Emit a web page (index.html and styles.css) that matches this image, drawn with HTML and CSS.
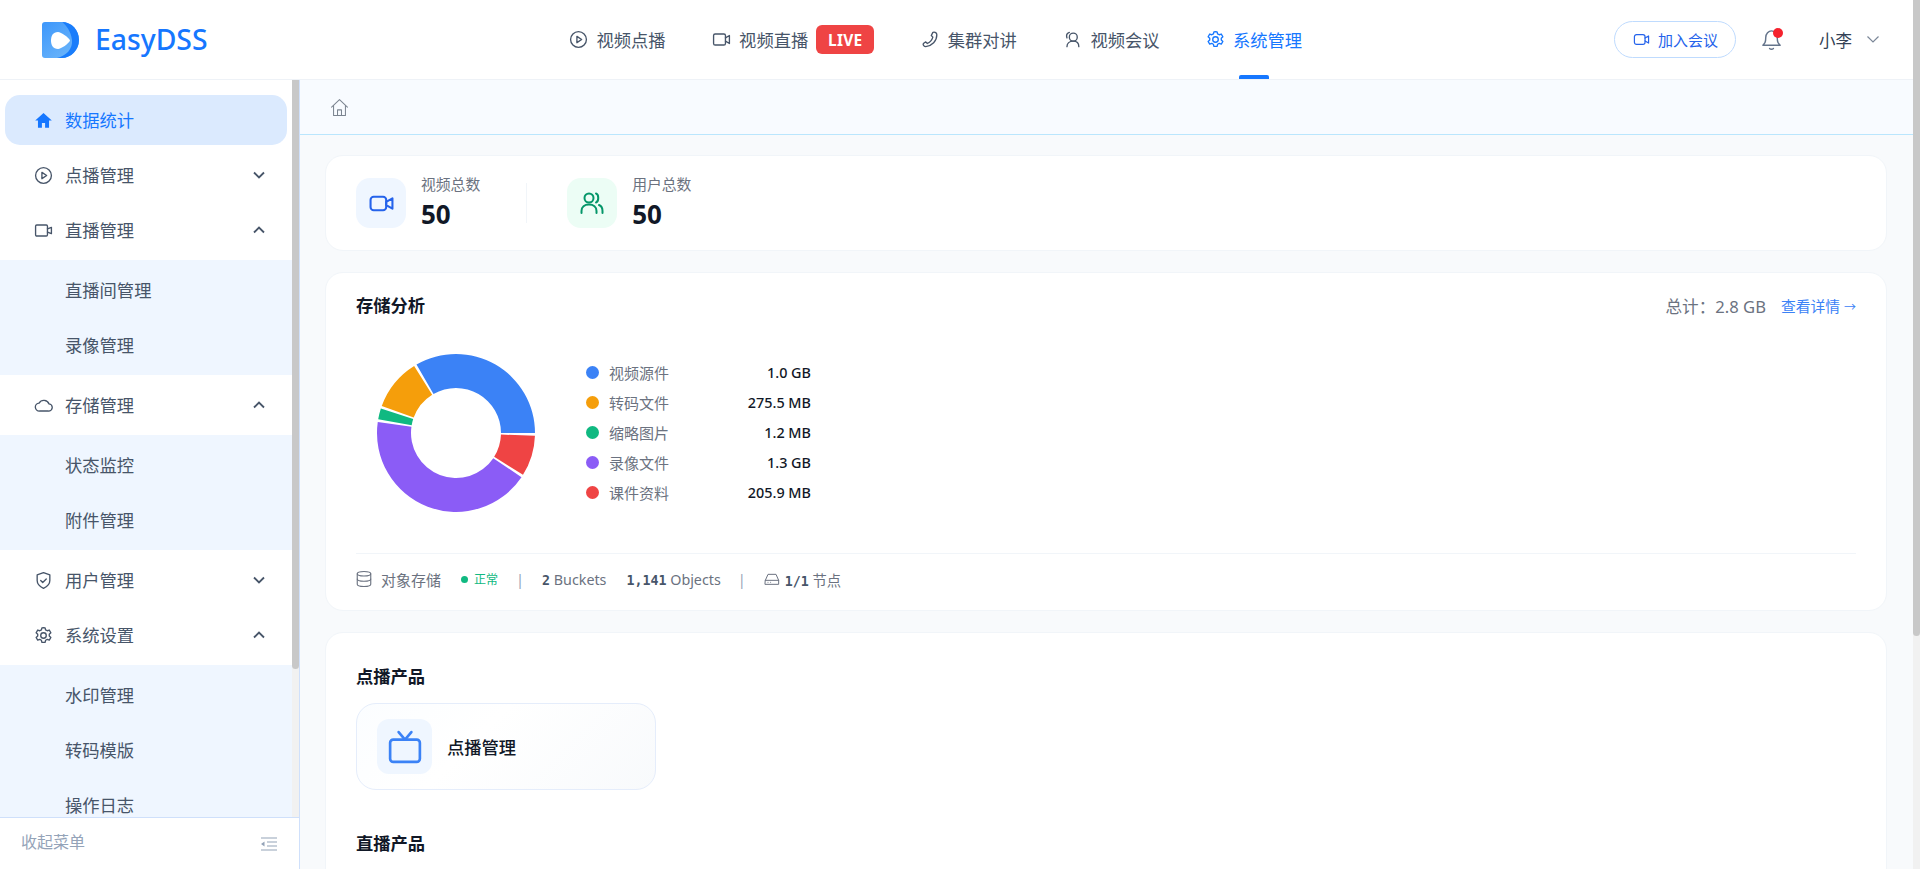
FILE: index.html
```html
<!DOCTYPE html>
<html lang="zh-CN">
<head>
<meta charset="utf-8">
<title>EasyDSS</title>
<link rel="stylesheet" href="styles.css">
</head>
<body>
<div class="app">
  <div class="page">
    <header class="topbar">
      <a class="logo">
        <svg class="logo-mark" viewBox="0 0 37 36" width="37" height="36">
          <defs>
            <linearGradient id="lg1" x1="0" y1="0" x2="0.8" y2="1"><stop offset="0" stop-color="#3d97fb"/><stop offset="1" stop-color="#6db6fa"/></linearGradient>
          </defs>
          <path d="M3 0H19C29 0 37 8 37 18C37 28 29 36 19 36H3C1 36 0 35 0 33V3C0 1 1 0 3 0Z" fill="url(#lg1)"/>
          <path d="M20 0C30 0 37 8 37 18C37 28 29 36 20 36H15C24 34 31 27 30 18C29 9 24 3 20 0Z" fill="#1a7dfb"/>
          <path d="M16 10C11 10 9 14 9 18.500C9 23 11 27 16 27C19 27 27 21.500 28 18.500C27 15.500 19 10 16 10Z" fill="#fff"/>
        </svg>
        <span class="logo-text">EasyDSS</span>
      </a>
      <nav class="topnav">
        <a class="tn-item">
          <svg class="ic19" viewBox="0 0 24 24"><circle cx="12" cy="12" r="10"/><path d="M10 8l6 4-6 4z"/></svg>
          <span>视频点播</span>
        </a>
        <a class="tn-item">
          <svg class="ic19" viewBox="0 0 24 24"><rect x="2" y="5" width="15" height="14" rx="2"/><path d="M17 10l5-3v10l-5-3"/></svg>
          <span>视频直播</span><span class="live">LIVE</span>
        </a>
        <a class="tn-item">
          <svg class="ic19" viewBox="0 0 24 24"><path d="M15 3c3-1 5 1 5 3 0 8-6 14-14 15-2 0-4-2-3-4l3-2 2 2c3-1 6-5 7-8l-2-2z"/></svg>
          <span>集群对讲</span>
        </a>
        <a class="tn-item">
          <svg class="ic19" viewBox="0 0 24 24"><circle cx="13" cy="9" r="5"/><path d="M5 21c0-4 3-7 8-7s7 3 7 7"/><path d="M8 3C5 4 4 7 5 10"/></svg>
          <span>视频会议</span>
        </a>
        <a class="tn-item is-active">
          <svg class="ic19" viewBox="0 0 24 24"><path d="M12 2l2 .3.7 2.7 2 1 2.6-.9 2 3.400-2 1.900v2.200l2 1.900-2 3.400-2.600-.9-2 1-.7 2.700h-4l-.7-2.700-2-1-2.600.9-2-3.400 2-1.900v-2.200l-2-1.900 2-3.400 2.600.9 2-1 .7-2.700z"/><circle cx="12" cy="12" r="3.500"/></svg>
          <span>系统管理</span>
        </a>
      </nav>
      <div class="top-right">
        <button class="join">
          <svg class="ic17" viewBox="0 0 24 24"><rect x="2" y="5" width="15" height="14" rx="3"/><path d="M17 10l5-3v10l-5-3"/></svg>
          <span>加入会议</span>
        </button>
        <span class="bell">
          <svg class="ic23" viewBox="0 0 24 24"><path d="M3 18c2-2 3-3 3-8 0-4 3-7 6-7s6 3 6 7c0 5 1 6 3 8z"/><path d="M10 21.500c1 1 3 1 4 0"/></svg>
          <i class="bell-dot"></i>
        </span>
        <span class="user">小李</span>
        <svg class="user-chev" viewBox="0 0 12 7"><path d="M.5.5L6 6l5.500-5.500"/></svg>
      </div>
    </header>

    <div class="layout">
      <aside class="sidebar">
        <div class="side-scroll">
          <ul class="menu">
            <li class="row is-active">
              <svg class="ic19 solid" viewBox="0 0 24 24"><path d="M12 2.500L1.500 12H5v9h5v-6h4v6h5v-9h3.500z"/></svg>
              <span>数据统计</span>
            </li>
            <li class="row">
              <svg class="ic19" viewBox="0 0 24 24"><circle cx="12" cy="12" r="10"/><path d="M10 8l6 4-6 4z"/></svg>
              <span>点播管理</span>
              <svg class="chev" viewBox="0 0 12 8"><path d="M1 1.500l5 5 5-5"/></svg>
            </li>
            <li class="row">
              <svg class="ic19" viewBox="0 0 24 24"><rect x="2" y="5" width="15" height="14" rx="1.500"/><path d="M17 10l5-2v8l-5-2"/></svg>
              <span>直播管理</span>
              <svg class="chev" viewBox="0 0 12 8"><path d="M1 6.500l5-5 5 5"/></svg>
            </li>
            <li class="sub">
              <a class="sub-row">直播间管理</a>
              <a class="sub-row">录像管理</a>
            </li>
            <li class="row">
              <svg class="ic19" viewBox="0 0 24 24"><path d="M7 19a5 5 0 0 1-.6-10A7 7 0 0 1 19 10a4.500 4.500 0 0 1-1 9z"/></svg>
              <span>存储管理</span>
              <svg class="chev" viewBox="0 0 12 8"><path d="M1 6.500l5-5 5 5"/></svg>
            </li>
            <li class="sub">
              <a class="sub-row">状态监控</a>
              <a class="sub-row">附件管理</a>
            </li>
            <li class="row">
              <svg class="ic19" viewBox="0 0 24 24"><path d="M12 2l8 3v7c0 5-4 8-8 10-4-2-8-5-8-10V5z"/><path d="M8.500 12l2.500 2.500 4.500-4.500"/></svg>
              <span>用户管理</span>
              <svg class="chev" viewBox="0 0 12 8"><path d="M1 1.500l5 5 5-5"/></svg>
            </li>
            <li class="row">
              <svg class="ic19" viewBox="0 0 24 24"><path d="M12 2l2 .3.7 2.700 2 1 2.600-.9 2 3.400-2 1.900v2.200l2 1.900-2 3.400-2.600-.9-2 1-.7 2.700h-4l-.7-2.700-2-1-2.600.9-2-3.400 2-1.900v-2.200l-2-1.900 2-3.400 2.600.9 2-1 .7-2.700z"/><circle cx="12" cy="12" r="3.500"/></svg>
              <span>系统设置</span>
              <svg class="chev" viewBox="0 0 12 8"><path d="M1 6.500l5-5 5 5"/></svg>
            </li>
            <li class="sub">
              <a class="sub-row">水印管理</a>
              <a class="sub-row">转码模版</a>
              <a class="sub-row">操作日志</a>
            </li>
          </ul>
          <div class="vbar side"><div class="thumb"></div></div>
        </div>
        <div class="side-foot">
          <span>收起菜单</span>
          <svg class="collapse" viewBox="0 0 18 14"><path d="M1 1h16M7 5h10M7 9h10M1 13h16"/><path class="fill" d="M4.500 4.500L1 7l3.500 2.500z"/></svg>
        </div>
      </aside>

      <main class="main">
        <div class="crumb">
          <svg class="ic19 home" viewBox="0 0 24 24"><path d="M2 11.500L12 2l10 9.500"/><path d="M4.500 9.500V22h15V9.500"/><path d="M9.500 22v-7h5v7"/></svg>
        </div>
        <div class="content">
          <section class="card stats">
            <div class="stat">
              <div class="stat-ic blue">
                <svg viewBox="0 0 24 24" width="25" height="25"><rect x="1.500" y="5.500" width="15" height="13" rx="3"/><path d="M16.500 10.500l6-3.500v10l-6-3.500z"/></svg>
              </div>
              <div class="stat-tx"><div class="stat-l">视频总数</div><div class="stat-v">50</div></div>
            </div>
            <div class="vline"></div>
            <div class="stat">
              <div class="stat-ic green">
                <svg viewBox="0 0 24 24" width="24" height="24"><circle cx="9" cy="7" r="4.500"/><path d="M1.500 22v-2c0-4 3-6.500 7.500-6.500s7.500 2.500 7.500 6.500v2"/><path d="M16 2.500c3 .8 3 8 0 9"/><path d="M19 14c2.500 1 3.500 3 3.500 6v2"/></svg>
              </div>
              <div class="stat-tx"><div class="stat-l">用户总数</div><div class="stat-v">50</div></div>
            </div>
          </section>

          <section class="card storage">
            <div class="st-head">
              <h3 class="h-title">存储分析</h3>
              <div class="st-total">总计：2.8 GB</div>
              <a class="st-link">查看详情 <span class="arr">→</span></a>
            </div>
            <div class="st-body">
              <svg class="donut" viewBox="0 0 160 160" width="160" height="160">
                <path fill="#3b82f6" d="M159 80A79 79 0 0 0 40.500 11.590L57.500 41.030A45 45 0 0 1 125 80Z"/>
                <path fill="#f59e0b" d="M38.140 13.010A79 79 0 0 0 5.760 52.980L37.710 64.610A45 45 0 0 1 56.150 41.840Z"/>
                <path fill="#10b981" d="M4.860 55.590A79 79 0 0 0 2.200 66.280L35.680 72.190A45 45 0 0 1 37.200 66.090Z"/>
                <path fill="#8b5cf6" d="M1.770 69A79 79 0 0 0 145.490 124.180L117.310 105.160A45 45 0 0 1 35.440 73.740Z"/>
                <path fill="#ef4444" d="M146.990 121.860A79 79 0 0 0 158.950 82.760L124.970 81.570A45 45 0 0 1 118.160 103.850Z"/>
              </svg>
              <ul class="legend">
                <li><i class="dot c1"></i><span class="lg-l">视频源件</span><b class="lg-v">1.0 GB</b></li>
                <li><i class="dot c2"></i><span class="lg-l">转码文件</span><b class="lg-v">275.5 MB</b></li>
                <li><i class="dot c3"></i><span class="lg-l">缩略图片</span><b class="lg-v">1.2 MB</b></li>
                <li><i class="dot c4"></i><span class="lg-l">录像文件</span><b class="lg-v">1.3 GB</b></li>
                <li><i class="dot c5"></i><span class="lg-l">课件资料</span><b class="lg-v">205.9 MB</b></li>
              </ul>
            </div>
            <div class="st-foot">
              <svg class="ic18 gray db" viewBox="0 0 24 24"><ellipse cx="12" cy="5" rx="9" ry="3"/><path d="M3 5v14c0 1.700 4 3 9 3s9-1.300 9-3V5"/><path d="M3 12c0 1.700 4 3 9 3s9-1.300 9-3"/></svg>
              <span class="f-name">对象存储</span>
              <span class="f-status"><i></i>正常</span>
              <span class="f-sep">|</span>
              <span class="f-m"><b>2</b> Buckets</span>
              <span class="f-m f-obj"><b>1,141</b> Objects</span>
              <span class="f-sep second">|</span>
              <svg class="ic16 gray hdd" viewBox="0 0 24 24"><path d="M2 14l4-9h12l4 9v6H2z"/><path d="M2 14h20"/><path d="M6 17h.01M10 17h.01"/></svg>
              <span class="f-m f-node"><b>1/1</b> 节点</span>
            </div>
          </section>

          <section class="card products">
            <h3 class="h-title">点播产品</h3>
            <div class="tiles">
              <a class="tile">
                <span class="tile-ic"><svg viewBox="0 0 32 32" width="34" height="34"><rect x="2" y="9" width="28" height="21" rx="3"/><path d="M10 2l6 7 6-7"/></svg></span>
                <span class="tile-t">点播管理</span>
              </a>
            </div>
            <h3 class="h-title next">直播产品</h3>
          </section>
        </div>
      </main>
    </div>
  </div>
  <div class="vbar page-bar"><div class="thumb"></div></div>
</div>
</body>
</html>
```
FILE: styles.css
```css
* { box-sizing: border-box; }
html, body { margin: 0; height: 100%; overflow: hidden; }
body {
  font-family: "Noto Sans", "Noto Sans CJK SC", sans-serif;
  color: #475569;
  background: #f8fafc;
}
ul { list-style: none; margin: 0; padding: 0; }
h3 { margin: 0; }
svg { flex: none; display: block; }

.app { display: flex; height: 100vh; overflow: hidden; }
.page { flex: 1; min-width: 0; height: 100%; overflow: hidden; }

/* drawn scrollbars */
.vbar { flex: none; width: 7px; background: #f1f1f1; }
.thumb { width: 100%; background: #c8c8c8; border-radius: 0 0 4px 4px; }
.page-bar .thumb { height: 636px; }
.vbar.side .thumb { height: 589px; }

.ic16, .ic17, .ic18, .ic19, .ic23 { fill: none; stroke: currentColor; stroke-width: 1.7; stroke-linejoin: round; stroke-linecap: round; }
.ic16 { width: 16px; height: 16px; }
.ic17 { width: 17px; height: 17px; }
.ic18 { width: 18px; height: 18px; }
.ic19 { width: 19px; height: 19px; }
.ic23 { width: 23px; height: 23px; stroke-width: 1.500; }

/* top bar */
.topbar {
  display: flex; align-items: center;
  height: 80px; padding: 0 34px 0 42px;
  background: #fff;
  border-bottom: 1px solid #eef2f7;
}
.logo { display: flex; align-items: center; gap: 16px; }
.logo-text { font-size: 28.300px; font-weight: 500; color: #1677ff; line-height: 1; }
.topnav { display: flex; align-items: center; gap: 46.500px; margin-left: 362px; height: 79px; }
.tn-item { position: relative; display: flex; align-items: center; height: 100%; gap: 8px; font-size: 17.300px; color: #475569; }
.tn-item.is-active { color: #1677ff; }
.tn-item.is-active::after {
  content: ""; position: absolute; left: 33px; bottom: 0; width: 30px; height: 4px;
  background: #1677ff; border-radius: 2px 2px 0 0;
}
.live {
  width: 58px; height: 29px; display: flex; align-items: center; justify-content: center;
  background: #ef4444; color: #fff; border-radius: 6px; font-size: 15.500px; font-weight: 700; letter-spacing: .2px;
}
.top-right { margin-left: auto; display: flex; align-items: center; }
.join {
  display: flex; align-items: center; gap: 8px; height: 37px; width: 122px; padding: 0 0 0 18px;
  border: 1px solid #bfdbfe; border-radius: 19px; background: #fff; color: #2563eb;
  font: inherit; font-size: 15px;
}
.bell { position: relative; margin-left: 24px; color: #64748b; }
.bell-dot { position: absolute; right: 0; top: 0; width: 10px; height: 10px; border-radius: 50%; background: #f5222d; }
.user { margin-left: 36px; font-size: 16.500px; color: #334155; }
.user-chev { margin-left: 15px; width: 12px; height: 7px; fill: none; stroke: #7b8798; stroke-width: 1.200; }

/* layout */
.layout { display: flex; align-items: flex-start; }
.sidebar {
  flex: none;
  display: flex; flex-direction: column;
  width: 300px; height: 789px;
  background: #fff;
  border-right: 1px solid #cfe0fb;
}
.side-scroll { flex: 1; min-height: 0; overflow: hidden; display: flex; }
.side-scroll .vbar { height: 100%; }
.menu { flex: 1; min-width: 0; display: flex; flex-direction: column; gap: 5px; padding: 15px 0 0; font-size: 17.300px; }
.row { flex: none; display: flex; align-items: center; height: 50px; padding: 0 27px 0 34px; gap: 12px; color: #475569; }
.row span { margin-bottom: 2px; }
.row .chev { margin-left: auto; width: 12px; height: 8px; fill: none; stroke: #475569; stroke-width: 1.800; }
.row.is-active { margin: 0 5px; padding-left: 29px; background: #dbeafe; border-radius: 15px; color: #1677ff; }
.ic19.solid { fill: currentColor; stroke: none; }
.sub { flex: none; display: flex; flex-direction: column; gap: 5px; padding: 5px 0; background: #eff6ff; }
.sub-row { display: flex; align-items: center; height: 50px; padding: 0 0 2px 65px; }
.side-foot {
  flex: none; display: flex; align-items: center; justify-content: space-between;
  height: 52px; padding: 0 21px;
  border-top: 1px solid #cfe0fb;
  font-size: 16px; color: #94a3b8;
}
.side-foot span { margin-bottom: 5px; }
.collapse { width: 18px; height: 14px; fill: none; stroke: #94a3b8; stroke-width: 1.200; }
.collapse .fill { fill: #94a3b8; stroke: none; }

/* main */
.main { flex: 1; min-width: 0; }
.crumb {
  display: flex; align-items: center; height: 55px; padding-left: 30px;
  background: #f8fbff; border-bottom: 1px solid #bae6fd;
}
.home { color: #7b8490; stroke-width: 1.300; }
.content { display: flex; flex-direction: column; gap: 21px; padding: 20px 26px 0 25px; }
.card { background: #fff; border: 1px solid #f1f5f9; border-radius: 18px; }
.stats { display: flex; align-items: center; height: 96px; padding: 0 30px; }
.stat { display: flex; align-items: center; gap: 15px; }
.stat-ic { width: 50px; height: 50px; border-radius: 14px; display: flex; align-items: center; justify-content: center; fill: none; stroke-width: 2; stroke-linejoin: round; stroke-linecap: round; }
.stat-ic.blue { background: #eff6ff; stroke: #2563eb; }
.stat-ic.green { background: #ecfdf5; stroke: #059669; }
.stat-l { margin: -1px 0 3px; font-size: 14.800px; line-height: 20px; color: #6b7280; }
.stat-v { font-size: 26px; line-height: 34px; font-weight: 700; color: #111827; }
.vline { width: 1px; height: 40px; margin: 0 40px 0 46px; background: #f1f5f9; }

.storage { padding: 20px 30px 0 30px; height: 339px; }
.st-head { display: flex; align-items: center; height: 26px; }
.h-title { font-size: 17.300px; font-weight: 700; color: #111827; line-height: 26px; }
.st-total { margin-left: auto; font-size: 16.600px; color: #6b7280; }
.st-link { margin: 0 0 2px 15px; font-size: 14.800px; color: #3b82f6; }
.arr { font-size: 12px; }
.st-body { display: flex; align-items: center; margin-top: 34px; padding-left: 20px; }
.legend { display: flex; flex-direction: column; margin: -2px 0 0 50px; width: 225px; font-size: 15px; }
.legend li { display: flex; align-items: center; height: 30px; }
.dot { width: 13px; height: 13px; border-radius: 50%; margin-right: 10px; }
.c1 { background: #3b82f6; } .c2 { background: #f59e0b; } .c3 { background: #10b981; } .c4 { background: #8b5cf6; } .c5 { background: #ef4444; }
.lg-l { color: #6b7280; }
.lg-v { margin-left: auto; font-size: 14.400px; font-weight: 500; color: #111827; }
.st-foot { display: flex; align-items: center; margin-top: 40px; height: 56px; padding-bottom: 5px; border-top: 1px solid #f1f5f9; font-size: 14.500px; color: #6b7280; }
.gray { color: #6b7280; stroke-width: 1.500; }
.db { margin-left: -1px; }
.f-name { margin-left: 8px; font-size: 15px; }
.f-status { display: flex; align-items: center; gap: 6px; margin-left: 20px; font-size: 12px; color: #10b981; }
.f-status i { width: 7px; height: 7px; border-radius: 50%; background: #10b981; }
.f-sep { margin-left: 18px; color: #94a3b8; }
.f-m { margin-left: 18px; font-size: 14.300px; }
.f-m b { font-family: "DejaVu Sans Mono", monospace; font-size: 13.300px; color: #475569; font-weight: 700; }
.f-obj { margin-left: 20px; }
.f-sep.second { margin-left: 17px; }
.hdd { margin-left: 18px; }
.f-node { margin-left: 5px; }

.products { padding: 31px 30px 0 30px; height: 400px; }
.tiles { display: flex; margin-top: 13px; }
.h-title.next { margin-top: 41px; }
.tile {
  display: flex; align-items: center; gap: 15px; width: 300px; height: 87px; padding-left: 20px;
  border: 1px solid #e5edfb; border-radius: 20px;
  background: linear-gradient(135deg, #fbfdff, #fff 40%, #f8fafc);
}
.tile-ic { width: 55px; height: 55px; border-radius: 12px; background: #eff6ff; display: flex; align-items: center; justify-content: center; fill: none; stroke: #3b82f6; stroke-width: 2.500; stroke-linejoin: round; stroke-linecap: round; }
.tile-t { font-size: 17.300px; font-weight: 500; color: #111827; }
```
